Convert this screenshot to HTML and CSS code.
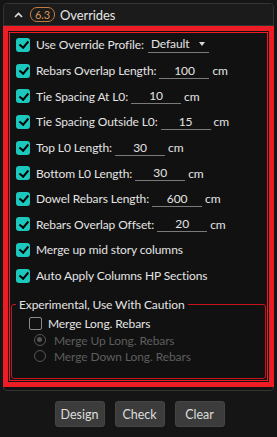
FILE: index.html
```html
<!DOCTYPE html>
<html lang="en">
<head>
  <meta charset="UTF-8" />
  <title>Overrides</title>
  <link rel="stylesheet" href="styles.css">
</head>
<body>
  <section class="panel">
    <header class="panel-head">
      <svg class="chevron" width="9" height="6" viewBox="0 0 9 6"><path d="M1 5 L4.5 1.5 L8 5" fill="none" stroke="#e0e0e0" stroke-width="1.6"/></svg>
      <span class="badge">6.3</span>
      <span class="title">Overrides</span>
    </header>

    <div class="panel-body">
      <div class="highlight">
        <div class="row first">
          <span class="check on"></span>
          <span class="label">Use Override Profile:</span>
          <span class="dropdown">Default <span class="caret"></span></span>
        </div>
        <div class="row">
          <span class="check on"></span>
          <span class="label">Rebars Overlap Length:</span>
          <span class="field">100</span><span class="unit">cm</span>
        </div>
        <div class="row">
          <span class="check on"></span>
          <span class="label">Tie Spacing At L0:</span>
          <span class="field">10</span><span class="unit">cm</span>
        </div>
        <div class="row">
          <span class="check on"></span>
          <span class="label">Tie Spacing Outside L0:</span>
          <span class="field">15</span><span class="unit">cm</span>
        </div>
        <div class="row">
          <span class="check on"></span>
          <span class="label">Top L0 Length:</span>
          <span class="field">30</span><span class="unit">cm</span>
        </div>
        <div class="row">
          <span class="check on"></span>
          <span class="label">Bottom L0 Length:</span>
          <span class="field">30</span><span class="unit">cm</span>
        </div>
        <div class="row">
          <span class="check on"></span>
          <span class="label">Dowel Rebars Length:</span>
          <span class="field">600</span><span class="unit">cm</span>
        </div>
        <div class="row">
          <span class="check on"></span>
          <span class="label">Rebars Overlap Offset:</span>
          <span class="field">20</span><span class="unit">cm</span>
        </div>
        <div class="row">
          <span class="check on"></span>
          <span class="label">Merge up mid story columns</span>
        </div>
        <div class="row">
          <span class="check on"></span>
          <span class="label">Auto Apply Columns HP Sections</span>
        </div>

        <fieldset class="experimental">
          <legend>Experimental, Use With Caution</legend>
          <div class="sub-row">
            <span class="check off"></span>
            <span class="label">Merge Long. Rebars</span>
          </div>
          <div class="radio-row">
            <span class="radio selected"></span>
            <span>Merge Up Long. Rebars</span>
          </div>
          <div class="radio-row">
            <span class="radio"></span>
            <span>Merge Down Long. Rebars</span>
          </div>
        </fieldset>
      </div>
    </div>
  </section>

  <div class="actions">
    <button>Design</button>
    <button>Check</button>
    <button>Clear</button>
  </div>
</body>
</html>
```

FILE: styles.css
```css
body {
  margin: 0;
  padding: 3px;
  background-color: #151515;
  color: #e4e4e4;
  font-family: 'Lato', sans-serif;
  font-size: 12px;
  letter-spacing: -0.1px;
}
.panel {
  border: 1px solid #343434;
  border-radius: 4px;
  background: #111;
  box-sizing: border-box;
  width: 271px;
}
.panel-head {
  height: 21px;
  display: flex;
  align-items: center;
  background: #1b1b1b;
  border-bottom: 1px solid #343434;
  border-radius: 4px 4px 0 0;
  padding-left: 10px;
}
.chevron {
  margin-right: 7px;
}
.badge {
  border: 1px solid #c47c3e;
  color: #d9945a;
  border-radius: 7px;
  font-size: 11px;
  line-height: 11px;
  padding: 1px 4px;
  margin-right: 5px;
}
.title {
  font-size: 13px;
  color: #e6e6e6;
}
.panel-body {
  padding-bottom: 3px;
  margin: 0 -1px;
}
.highlight {
  border: 5px solid #ee1c25;
  box-shadow: inset 0 0 0 1px #111, inset 0 0 0 2px #ee1c25;
  padding: 0 2px 3px 2px;
}
.row {
  height: 25.6px;
  display: flex;
  align-items: center;
  padding-left: 6px;
}
.row.first {
  height: 27px;
}
.check {
  width: 14px;
  height: 14px;
  border-radius: 3px;
  box-sizing: border-box;
  flex-shrink: 0;
  margin-right: 6px;
  position: relative;
}
.check.on {
  background: #1cc8bd;
}
.check.on::after {
  content: "";
  position: absolute;
  left: 4.5px;
  top: 1.5px;
  width: 3.5px;
  height: 7px;
  border: solid #000;
  border-width: 0 2px 2px 0;
  transform: rotate(40deg);
}
.check.off {
  border: 1.5px solid #8a8a8a;
  width: 13px;
  height: 13px;
  border-radius: 2px;
}
.label {
  white-space: nowrap;
}
.field {
  width: 50px;
  margin-left: 3px;
  text-align: center;
  border-bottom: 1px solid #7a7a7a;
  line-height: 15px;
}
.unit {
  margin-left: 3px;
}
.dropdown {
  margin-left: 4px;
  width: 58px;
  padding-left: 3px;
  border-bottom: 1px solid #7a7a7a;
  line-height: 16px;
  display: flex;
  align-items: center;
  gap: 10px;
}
.caret {
  width: 0;
  height: 0;
  border-left: 3.5px solid transparent;
  border-right: 3.5px solid transparent;
  border-top: 4px solid #d8d8d8;
}
.experimental {
  margin: 9px 1px 0 1px;
  border: 1px solid #c8141c;
  border-radius: 3px;
  padding: 2px 0 14px 2px;
}
.experimental legend {
  padding: 0 3px;
  margin-left: 2px;
  color: #e4e4e4;
}
.sub-row {
  display: flex;
  align-items: center;
  height: 18px;
  padding-left: 15px;
}
.sub-row .check {
  margin-right: 6px;
}
.radio-row {
  display: flex;
  align-items: center;
  height: 16px;
  padding-left: 20px;
  color: #5e5e5e;
}
.radio {
  width: 12px;
  height: 12px;
  border: 1.5px solid #555;
  border-radius: 50%;
  box-sizing: border-box;
  margin-right: 8px;
  position: relative;
}
.radio.selected::after {
  content: "";
  position: absolute;
  left: 2px;
  top: 2px;
  width: 5px;
  height: 5px;
  border-radius: 50%;
  background: #555;
}
.actions {
  display: flex;
  justify-content: center;
  gap: 10px;
  margin-top: 10px;
  padding-left: 2px;
}
button {
  width: 50px;
  height: 26px;
  background: #3c3c3c;
  color: #dedede;
  border: 1px solid #454545;
  border-radius: 3px;
  font-family: 'Lato', sans-serif;
  font-size: 12.5px;
  padding: 0;
}
```
